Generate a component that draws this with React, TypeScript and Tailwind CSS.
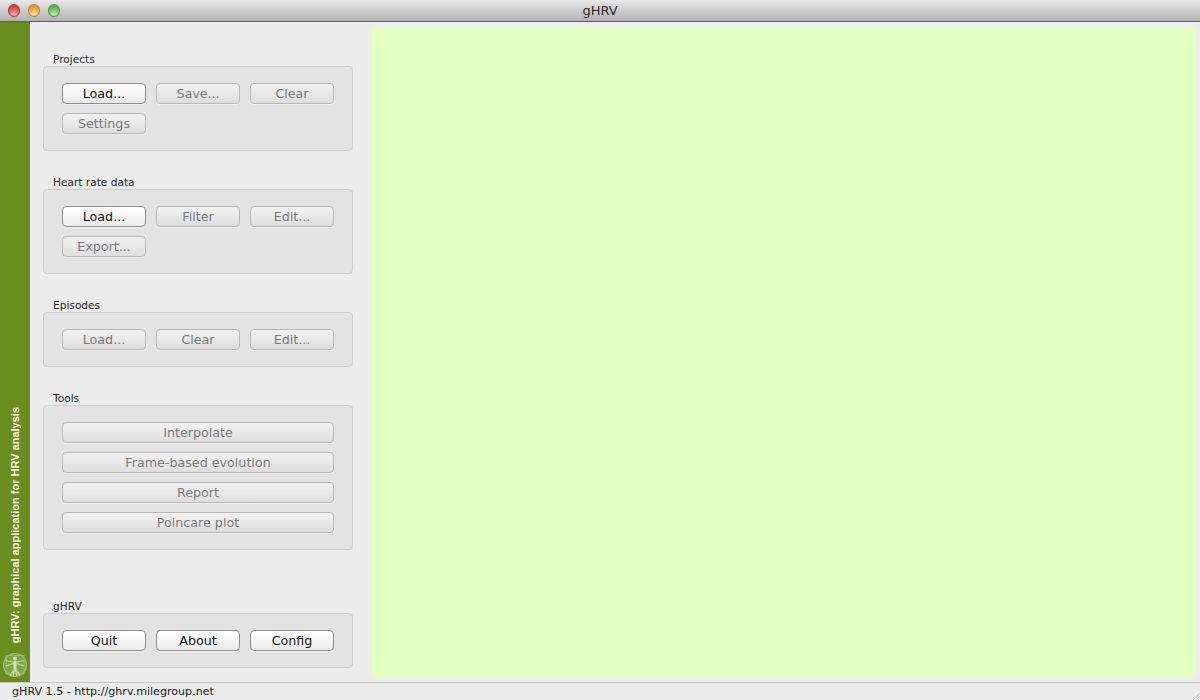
import React from "react";

const font = { fontFamily: '"DejaVu Sans", sans-serif' };

function Btn({ label, on, wide }: { label: string; on?: boolean; wide?: boolean }) {
  return (
    <div
      className={
        "flex h-[21px] items-center justify-center rounded-[4px] border pt-[1px] text-[12.7px] leading-none " +
        (wide ? "w-[272px] " : "w-[84px] ") +
        (on
          ? "border-[#8e8e8e] bg-gradient-to-b from-[#ffffff] via-[#f6f6f6] to-[#e9e9e9] text-[#111111] shadow-[0_1px_0_#f4f4f4]"
          : "border-[#b8b8b8] bg-gradient-to-b from-[#f1f1f1] via-[#e9e9e9] to-[#dddddd] text-[#7a7a7a] shadow-[0_1px_0_#eeeeee]")
      }
    >
      {label}
    </div>
  );
}

function Group({
  title,
  className,
  h,
  children,
}: {
  title: string;
  className?: string;
  h: string;
  children: React.ReactNode;
}) {
  return (
    <section className={className}>
      <div className="h-[15px] pl-[10px] pt-[1px] text-[10.6px] leading-[15px] text-[#2a2a2a]">{title}</div>
      <div className={"rounded-[4px] border border-[#cecece] bg-[#e3e3e3] pl-[18px] pt-[16px] " + h}>{children}</div>
    </section>
  );
}

function Vitruvian() {
  return (
    <svg width="26" height="26" viewBox="0 0 26 26" fill="none" stroke="#a3bf7c" strokeWidth="1.1">
      <circle cx="13" cy="13" r="11.5" fill="#83a243" />
      <rect x="4" y="3.5" width="18" height="18.5" strokeWidth="0.7" />
      <circle cx="13" cy="6.5" r="2" fill="#d3e2bd" stroke="none" />
      <path d="M3.5 8.5l9.5 2 9.5-2M4 14l9-3 9 3" stroke="#c3d6a6" strokeWidth="1.2" />
      <path d="M13 9v8" stroke="#d3e2bd" strokeWidth="3" />
      <path d="M13 16.5l-5 7M13 16.5l5 7M13 16.5l-2 7.5M13 16.5l2 7.5" stroke="#c3d6a6" strokeWidth="1.3" />
    </svg>
  );
}

export default function App() {
  return (
    <div className="relative flex h-[700px] w-[1200px] flex-col overflow-hidden bg-[#ececec]" style={font}>
      <header className="relative flex h-[22px] shrink-0 items-center justify-center border-b border-[#5f5f5f] bg-gradient-to-b from-[#e8e8e8] to-[#b2b2b2] text-[13px] text-[#2a2a2a]">
        <div className="absolute left-[8px] top-[4px] flex gap-[8px]">
          <span className="h-[13px] w-[12px] rounded-full border border-[#9e4040] bg-[radial-gradient(circle_at_50%_85%,#f8a8a8,#d9414a_70%)]" />
          <span className="h-[13px] w-[12px] rounded-full border border-[#a98440] bg-[radial-gradient(circle_at_50%_85%,#fde09a,#e39a30_70%)]" />
          <span className="h-[13px] w-[12px] rounded-full border border-[#5f8f50] bg-[radial-gradient(circle_at_50%_85%,#c2eeaa,#5cae50_70%)]" />
        </div>
        gHRV
      </header>

      <main className="flex min-h-0 flex-1">
        <aside className="flex w-[30px] shrink-0 flex-col items-center justify-end bg-[#6b8c1e]">
          <div
            className="mb-[8px] whitespace-nowrap font-bold leading-none text-[#f2f5e8]"
            style={{ writingMode: "vertical-rl", transform: "rotate(180deg)", fontFamily: '"Liberation Sans", sans-serif', fontSize: 11 }}
          >
            gHRV: graphical application for HRV analysis
          </div>
          <div className="mb-[3px] flex h-[28px] w-[30px] items-center justify-center">
            <Vitruvian />
          </div>
        </aside>

        <div className="flex w-[342px] shrink-0 flex-col pb-[14px] pl-[13px] pr-[19px] pt-[29px]">
          <Group title="Projects" h="h-[85px]">
            <div className="flex flex-wrap gap-x-[10px] gap-y-[9px]">
              <Btn label="Load..." on />
              <Btn label="Save..." />
              <Btn label="Clear" />
              <Btn label="Settings" />
            </div>
          </Group>
          <Group title="Heart rate data" className="mt-[23px]" h="h-[85px]">
            <div className="flex flex-wrap gap-x-[10px] gap-y-[9px]">
              <Btn label="Load..." on />
              <Btn label="Filter" />
              <Btn label="Edit..." />
              <Btn label="Export..." />
            </div>
          </Group>
          <Group title="Episodes" className="mt-[23px]" h="h-[55px]">
            <div className="flex gap-x-[10px]">
              <Btn label="Load..." />
              <Btn label="Clear" />
              <Btn label="Edit..." />
            </div>
          </Group>
          <Group title="Tools" className="mt-[23px]" h="h-[145px]">
            <div className="flex flex-col gap-y-[9px]">
              <Btn wide label="Interpolate" />
              <Btn wide label="Frame-based evolution" />
              <Btn wide label="Report" />
              <Btn wide label="Poincare plot" />
            </div>
          </Group>
          <Group title="gHRV" className="mt-auto" h="h-[55px]">
            <div className="flex gap-x-[10px]">
              <Btn label="Quit" on />
              <Btn label="About" on />
              <Btn label="Config" on />
            </div>
          </Group>
        </div>

        <div className="flex-1 pb-[5px] pr-[4px] pt-[5px]">
          <div className="h-full w-full bg-[#e0ffc0]" />
        </div>
      </main>

      <footer className="flex h-[18px] shrink-0 items-center border-t border-[#c4c4c0] bg-[#ececec] pl-[12px] text-[11.1px] leading-none text-[#1c1c1c]">
        gHRV 1.5 - http://ghrv.milegroup.net
      </footer>
      <svg className="absolute bottom-0 right-0" width="10" height="10" viewBox="0 0 10 10" stroke="#c8c8c8" strokeWidth="1">
        <path d="M9.5 3.5l-6 6M9.5 6.5l-3 3" />
      </svg>
    </div>
  );
}
